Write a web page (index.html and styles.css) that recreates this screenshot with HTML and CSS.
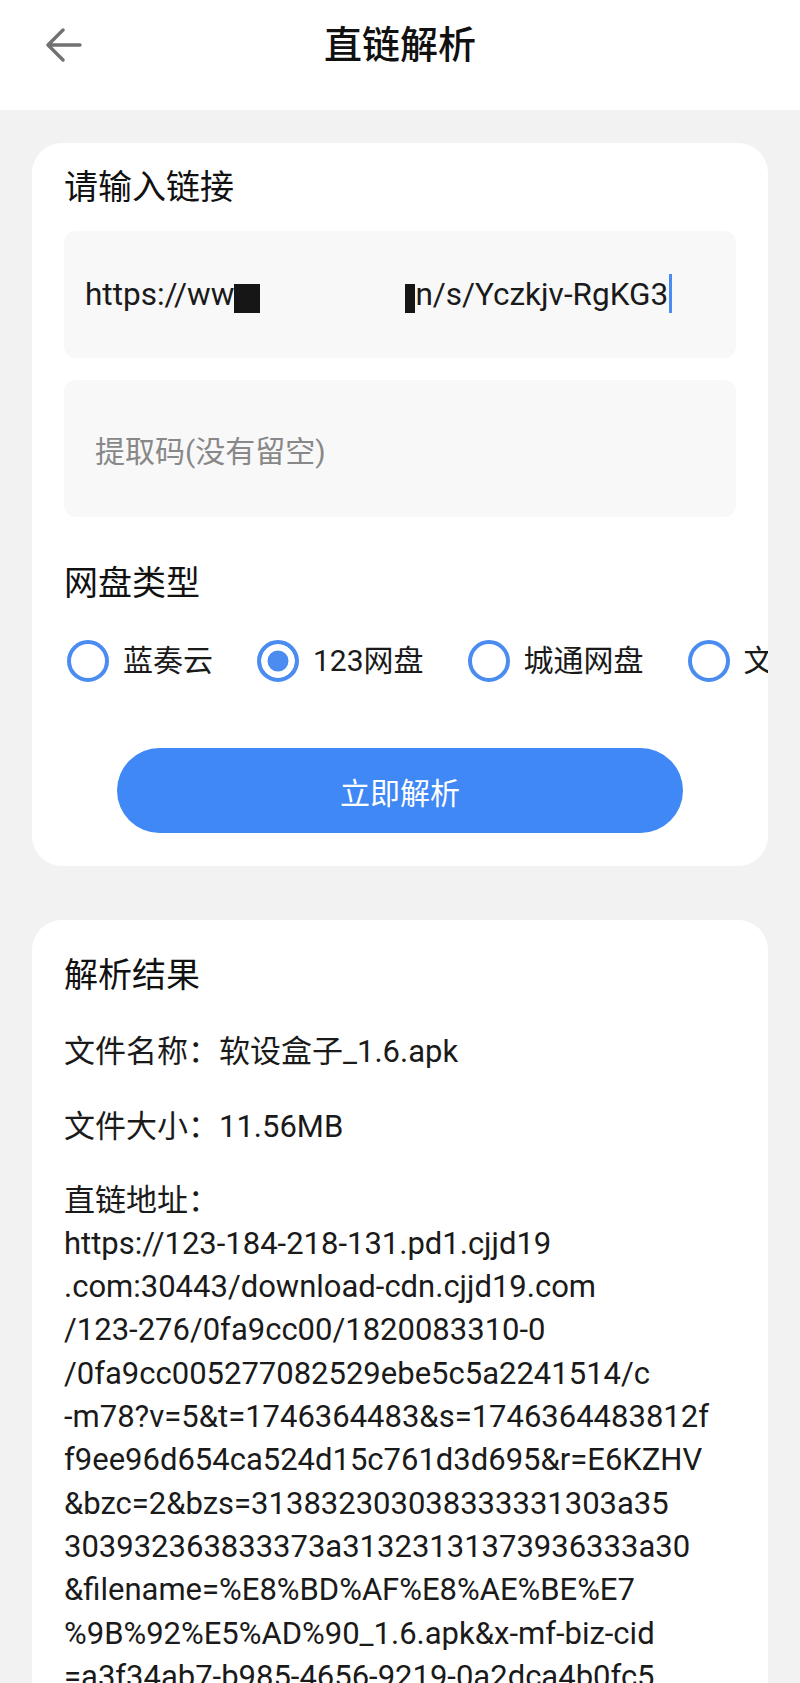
FILE: index.html
```html
<!DOCTYPE html>
<html>
    <head>
        <meta charset="utf-8">
        <title>直链解析</title>
        <link rel="stylesheet" href="styles.css">
    </head>
    <body>
        <div class="top-bar">
            <div class="back">
                <svg width="36" height="34" viewBox="0 0 36 34">
                    <path d="M34 17H3M17 2L2 17L17 32" fill="none" stroke="#727272" stroke-width="3.4" stroke-linecap="round" stroke-linejoin="round"/>
                </svg>
            </div>
            <h1>直链解析</h1>
            <div></div>
        </div>

        <div class="page">
            <div class="card">
                <div class="card-title">请输入链接</div>
                <div class="field field-link">https://ww<span class="mask mask-wide"></span><span class="mask-gap"></span><span class="mask mask-thin"></span>n/s/Yczkjv-RgKG3<span class="caret"></span></div>
                <div class="field field-code">提取码(没有留空)</div>

                <div class="card-title type-title">网盘类型</div>
                <div class="radios">
                    <label class="radio"><span class="dot"></span>蓝奏云</label>
                    <label class="radio checked"><span class="dot"></span>123网盘</label>
                    <label class="radio"><span class="dot"></span>城通网盘</label>
                    <label class="radio"><span class="dot"></span>文叔叔</label>
                </div>

                <button class="parse-btn">立即解析</button>
            </div>

            <div class="card result">
                <div class="card-title">解析结果</div>
                <p class="row">文件名称：软设盒子_1.6.apk</p>
                <p class="row">文件大小：11.56MB</p>
                <p class="row link-row">直链地址：<br>https://123-184-218-131.pd1.cjjd19<br>.com:30443/download-cdn.cjjd19.com<br>/123-276/0fa9cc00/1820083310-0<br>/0fa9cc005277082529ebe5c5a2241514/c<br>-m78?v=5&amp;t=1746364483&amp;s=1746364483812f<br>f9ee96d654ca524d15c761d3d695&amp;r=E6KZHV<br>&amp;bzc=2&amp;bzs=313832303038333331303a35<br>303932363833373a31323131373936333a30<br>&amp;filename=%E8%BD%AF%E8%AE%BE%E7<br>%9B%92%E5%AD%90_1.6.apk&amp;x-mf-biz-cid<br>=a3f34ab7-b985-4656-9219-0a2dca4b0fc5</p>
            </div>
        </div>
    </body>
</html>
```

FILE: styles.css
```css
body {
  margin: 0;
  background: #f2f2f2;
  color: #1a1a1a;
  font-family: Roboto, "Noto Sans CJK SC", sans-serif;
}
.top-bar {
  display: grid;
  grid-template-columns: 1fr auto 1fr;
  align-items: center;
  height: 110px;
  box-sizing: border-box;
  padding-bottom: 20px;
  background: #fff;
}
.back {
  padding-left: 46px;
}
.back svg {
  display: block;
}
.top-bar h1 {
  margin: 0;
  font-size: 38px;
  line-height: 52px;
  font-weight: 500;
  color: #111;
}
.page {
  display: flex;
  flex-direction: column;
  gap: 54px;
  padding: 33px 32px 0;
}
.card {
  background: #fff;
  border-radius: 30px;
  padding: 22px 32px 33px;
  overflow: hidden;
}
.card-title {
  font-size: 34px;
  line-height: 45px;
  font-weight: 400;
  margin-bottom: 21px;
  color: #111;
}
.field {
  display: flex;
  align-items: center;
  height: 127px;
  box-sizing: border-box;
  padding: 0 21px;
  background: #f8f8f8;
  border-radius: 12px;
  font-size: 31.5px;
  white-space: nowrap;
}
.field-link {
  display: block;
  line-height: 127px;
}
.mask {
  display: inline-block;
  height: 29px;
  vertical-align: -8px;
  background: #161616;
}
.mask-wide {
  width: 26px;
}
.mask-thin {
  width: 10px;
}
.mask-gap {
  display: inline-block;
  width: 145px;
}
.caret {
  display: inline-block;
  width: 3px;
  height: 39px;
  margin-left: 1px;
  vertical-align: -8px;
  background: #4a8cf0;
}
.field-code {
  height: 137px;
  margin-top: 22px;
  padding-left: 31px;
  font-size: 30px;
  color: #888;
}
.type-title {
  margin-top: 44px;
  margin-bottom: 34px;
}
.radios {
  display: flex;
  gap: 44px;
  padding-left: 3px;
  white-space: nowrap;
}
.radio {
  display: flex;
  align-items: center;
  gap: 14px;
  flex-shrink: 0;
  font-size: 30px;
  line-height: 42px;
}
.dot {
  width: 42px;
  height: 42px;
  box-sizing: border-box;
  border: 4px solid #4a8cf0;
  border-radius: 50%;
}
.checked .dot {
  background: #4a8cf0;
  box-shadow: inset 0 0 0 6.5px #fff;
}
.parse-btn {
  display: block;
  width: calc(100% - 106px);
  height: 85px;
  margin: 66px auto 0;
  border: none;
  border-radius: 43px;
  background: #3f88f5;
  color: #fff;
  font-family: inherit;
  font-size: 30px;
}
.result {
  padding-top: 33px;
}
.result .card-title {
  margin-bottom: 0;
}
.row {
  margin: 32px 0 0;
  font-size: 31px;
  line-height: 43.3px;
  white-space: nowrap;
}
.link-row {
  margin-top: 30px;
}
```
